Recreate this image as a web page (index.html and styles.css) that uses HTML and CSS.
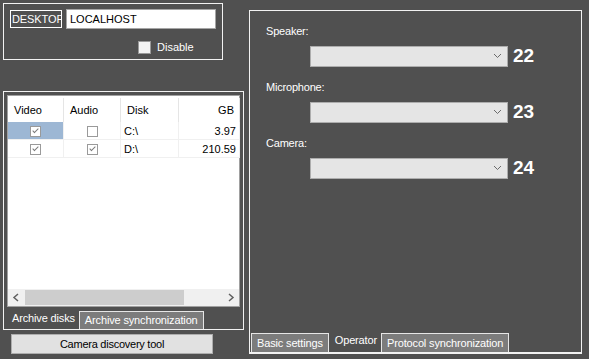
FILE: index.html
```html
<!DOCTYPE html>
<html lang="en">
<head>
  <meta charset="UTF-8">
  <title>Server settings</title>
  <link rel="stylesheet" href="styles.css">
</head>
<body>

<div class="window">
  <div class="left">
    <div class="host-box">
      <div class="host-row">
        <div class="host-name">DESKTOP</div>
        <div class="host-input">LOCALHOST</div>
      </div>
      <div class="disable-row">
        <span class="check-box"></span>
        <span>Disable</span>
      </div>
    </div>

    <div class="archive-box">
      <div class="disk-list">
        <table class="disks">
          <tr class="head">
            <th class="col-video">Video</th>
            <th class="col-audio">Audio</th>
            <th class="col-disk">Disk</th>
            <th class="col-gb">GB</th>
            <th class="col-rest"></th>
          </tr>
          <tr>
            <td class="center selected"><span class="cell-check checked"></span></td>
            <td class="center"><span class="cell-check"></span></td>
            <td>C:\</td>
            <td class="num">3.97</td>
            <td></td>
          </tr>
          <tr>
            <td class="center"><span class="cell-check checked"></span></td>
            <td class="center"><span class="cell-check checked"></span></td>
            <td>D:\</td>
            <td class="num">210.59</td>
            <td></td>
          </tr>
        </table>
        <div class="hscroll">
          <svg class="arrow" width="17" height="17" viewBox="0 0 17 17"><polyline points="10,5 6,8.5 10,12" fill="none" stroke="#606060" stroke-width="1.5"/></svg>
          <div class="track"><div class="thumb"></div></div>
          <svg class="arrow" width="17" height="17" viewBox="0 0 17 17"><polyline points="7,5 11,8.5 7,12" fill="none" stroke="#606060" stroke-width="1.5"/></svg>
        </div>
      </div>
      <div class="tabs">
        <div class="tab active">Archive disks</div>
        <div class="tab">Archive synchronization</div>
      </div>
    </div>

    <div class="discover-btn">Camera discovery tool</div>
  </div>

  <div class="operator">
    <div class="field">
      <div class="field-label">Speaker:</div>
      <div class="field-row">
        <div class="combo"><svg width="9" height="6" viewBox="0 0 9 6"><polyline points="1,1 4.5,4.5 8,1" fill="none" stroke="#6a6a6a" stroke-width="1"/></svg></div>
        <span class="callout">22</span>
      </div>
    </div>
    <div class="field">
      <div class="field-label">Microphone:</div>
      <div class="field-row">
        <div class="combo"><svg width="9" height="6" viewBox="0 0 9 6"><polyline points="1,1 4.5,4.5 8,1" fill="none" stroke="#6a6a6a" stroke-width="1"/></svg></div>
        <span class="callout">23</span>
      </div>
    </div>
    <div class="field">
      <div class="field-label">Camera:</div>
      <div class="field-row">
        <div class="combo"><svg width="9" height="6" viewBox="0 0 9 6"><polyline points="1,1 4.5,4.5 8,1" fill="none" stroke="#6a6a6a" stroke-width="1"/></svg></div>
        <span class="callout">24</span>
      </div>
    </div>

    <div class="tabs bottom-tabs">
      <div class="tab">Basic settings</div>
      <div class="tab active">Operator</div>
      <div class="tab">Protocol synchronization</div>
    </div>
  </div>
</div>

</body>
</html>
```

FILE: styles.css
```css
body {
  margin: 0;
  background-color: #505050;
  color: #fff;
  font-family: "Liberation Sans", Arial, sans-serif;
  font-size: 11px;
}
.window {
  display: flex;
  align-items: flex-start;
  padding: 3px;
}
.left {
  width: 241px;
}
/* Host box */
.host-box {
  width: 220px;
  height: 57px;
  box-sizing: border-box;
  border: 1px solid #f2f2f2;
  padding: 5px 6px 0 6px;
}
.host-row {
  display: flex;
  align-items: center;
}
.host-name {
  width: 52px;
  height: 18px;
  box-sizing: border-box;
  border: 1px solid #fff;
  padding: 0 1px;
  line-height: 16px;
  font-size: 11px;
  letter-spacing: -0.1px;
  overflow: hidden;
  white-space: nowrap;
}
.host-input {
  width: 150px;
  height: 20px;
  box-sizing: border-box;
  margin-left: 4px;
  background-color: #fff;
  border: 1px solid #a5a5a5;
  color: #000;
  padding-left: 3px;
  line-height: 18px;
  font-size: 11px;
}
.disable-row {
  display: flex;
  align-items: center;
  margin: 11px 0 0 128px;
  height: 14px;
}
.check-box {
  width: 13px;
  height: 13px;
  box-sizing: border-box;
  border: 1px solid #9a9a9a;
  background-color: #f4f4f4;
  margin-right: 6px;
}
/* Archive box */
.archive-box {
  margin-top: 31px;
  width: 241px;
  height: 239px;
  box-sizing: border-box;
  border: 1px solid #f2f2f2;
  padding: 3px 3px 0 3px;
}
.disk-list {
  height: 212px;
  box-sizing: border-box;
  border: 1px solid #a0a0a0;
  background-color: #fff;
  padding-top: 2px;
  display: flex;
  flex-direction: column;
  color: #000;
}
.disks {
  border-collapse: collapse;
  table-layout: fixed;
  width: 231px;
}
.disks th {
  height: 24px;
  font-weight: normal;
  text-align: left;
  padding: 0 0 0 6px;
  border-right: 1px solid #e5e5e5;
}
.disks th.col-video { width: 49px; }
.disks th.col-audio { width: 50px; }
.disks th.col-disk { width: 51px; }
.disks th.col-gb { width: 49px; text-align: right; padding-right: 5px; }
.disks th.col-rest { border-right: none; }
.disks td {
  height: 17px;
  padding: 0 0 0 3px;
  border-bottom: 1px solid #f0f0f0;
  border-right: 1px solid #f0f0f0;
}
.disks td:last-child {
  border-right: none;
}
.disks td.center {
  text-align: center;
  padding: 0;
}
.disks td.num {
  text-align: right;
  padding-right: 3px;
}
.disks td.selected {
  background-color: #9db7d4;
}
.cell-check {
  display: inline-block;
  vertical-align: middle;
  width: 11px;
  height: 11px;
  box-sizing: border-box;
  border: 1px solid #9a9a9a;
  background-color: #fff;
  position: relative;
}
.cell-check.checked::after {
  content: "";
  position: absolute;
  left: 3px;
  top: 0px;
  width: 2px;
  height: 5px;
  border: solid #7a7a7a;
  border-width: 0 1px 1px 0;
  transform: rotate(45deg);
}
.hscroll {
  margin-top: auto;
  height: 17px;
  display: flex;
  background-color: #f0f0f0;
}
.hscroll .track {
  flex-grow: 1;
  padding: 1px 0;
  box-sizing: border-box;
}
.hscroll .thumb {
  width: 159px;
  height: 15px;
  background-color: #cdcdcd;
}
/* Tabs */
.tabs {
  display: flex;
  align-items: flex-end;
  margin-top: 4px;
  height: 18px;
}
.tab {
  height: 18px;
  box-sizing: border-box;
  padding: 0 5px;
  line-height: 17px;
  background-color: #7c7c7c;
  border: 1px solid #e6e6e6;
  border-bottom: none;
  font-size: 11px;
  letter-spacing: -0.15px;
  white-space: nowrap;
}
.tab.active {
  background-color: transparent;
  border: none;
  line-height: 14px;
  padding: 0 4px 0 5px;
}
/* Button */
.discover-btn {
  margin: 4px 0 0 8px;
  width: 202px;
  height: 20px;
  box-sizing: border-box;
  background-color: #e1e1e1;
  border: 1px solid #adadad;
  color: #000;
  text-align: center;
  line-height: 18px;
  font-size: 11px;
  letter-spacing: -0.25px;
}
/* Operator panel */
.operator {
  margin: 7px 0 0 5px;
  width: 333px;
  height: 344px;
  box-sizing: border-box;
  border: 1px solid #f2f2f2;
  border-bottom: 2px solid #f2f2f2;
  padding: 14px 0 0 16px;
  display: flex;
  flex-direction: column;
}
.field {
  margin-bottom: 14px;
}
.field-label {
  line-height: 13px;
  height: 13px;
  letter-spacing: -0.2px;
}
.field-row {
  display: flex;
  align-items: center;
  margin: 7px 0 0 44px;
}
.combo {
  width: 198px;
  height: 21px;
  box-sizing: border-box;
  background-color: #e5e5e5;
  border: 1px solid #adadad;
  display: flex;
  align-items: center;
  justify-content: flex-end;
  padding-right: 5px;
}
.callout {
  margin-left: 5px;
  font-size: 19px;
  font-weight: bold;
}
.bottom-tabs {
  margin: auto 0 0 -15px;
  height: 19px;
}
.bottom-tabs .tab {
  height: 19px;
  line-height: 18px;
  padding: 0 5px;
}
.bottom-tabs .tab.active {
  line-height: 15px;
  padding: 0 4px 0 6px;
}
```
